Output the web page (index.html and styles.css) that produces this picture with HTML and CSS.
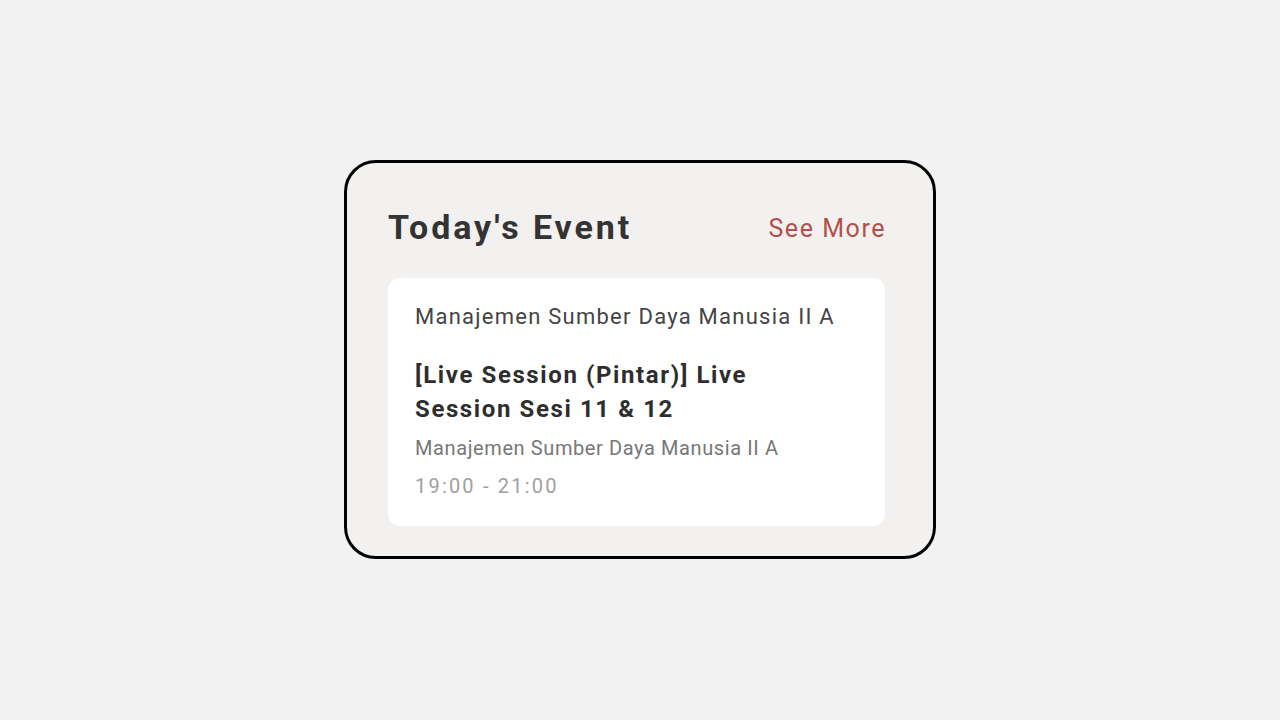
FILE: index.html
```html
<!DOCTYPE html>
<html>
<head>
<meta charset="utf-8">
<link rel="stylesheet" href="styles.css">
</head>
<body>
<div class="page">
  <section class="widget">
    <header class="widget-head">
      <h2 class="widget-title">Today's Event</h2>
      <a class="see-more" href="#">See More</a>
    </header>
    <article class="event">
      <div class="event-course">Manajemen Sumber Daya Manusia II A</div>
      <h3 class="event-title">[Live Session (Pintar)] Live Session Sesi 11 &amp; 12</h3>
      <div class="event-sub">Manajemen Sumber Daya Manusia II A</div>
      <div class="event-time">19:00 - 21:00</div>
    </article>
  </section>
</div>
</body>
</html>
```
FILE: styles.css
```css
* { box-sizing: border-box; }
html, body { margin: 0; padding: 0; }
body {
  background: #f2f2f2;
  font-family: Roboto, "Liberation Sans", sans-serif;
  width: 1280px;
  height: 720px;
}
.page {
  height: 720px;
  display: flex;
  align-items: center;
  justify-content: center;
}
.widget {
  width: 592px;
  height: 399px;
  margin-top: -1px;
  border: 3px solid #000;
  border-radius: 32px;
  background: #f2f1ef;
  padding: 0 48px 0 41px;
  display: flex;
  flex-direction: column;
}
.widget-head {
  height: 115px;
  display: flex;
  align-items: center;
  justify-content: space-between;
  padding-top: 12px;
}
.widget-title {
  margin: 0;
  font-size: 34px;
  font-weight: 700;
  color: #333333;
  letter-spacing: 2.9px;
}
.see-more {
  font-size: 25px;
  color: #b4504b;
  text-decoration: none;
  margin-top: 4px;
  letter-spacing: 1.55px;
  margin-right: -1px;
}
.event {
  background: #ffffff;
  border-radius: 12px;
  height: 248px;
  padding: 24px 27px 0 27px;
}
.event-course {
  font-size: 22px;
  color: #444444;
  line-height: 30px;
  letter-spacing: 1.25px;
}
.event-title {
  margin: 26px 0 0 0;
  font-size: 24px;
  font-weight: 700;
  color: #2e2e2e;
  line-height: 34px;
  width: 380px;
  letter-spacing: 1.6px;
}
.event-sub {
  margin-top: 7px;
  font-size: 20px;
  color: #777777;
  line-height: 30px;
  letter-spacing: 0.6px;
}
.event-time {
  margin-top: 8px;
  font-size: 20px;
  color: #a0a0a0;
  line-height: 30px;
  letter-spacing: 2.2px;
}
```
